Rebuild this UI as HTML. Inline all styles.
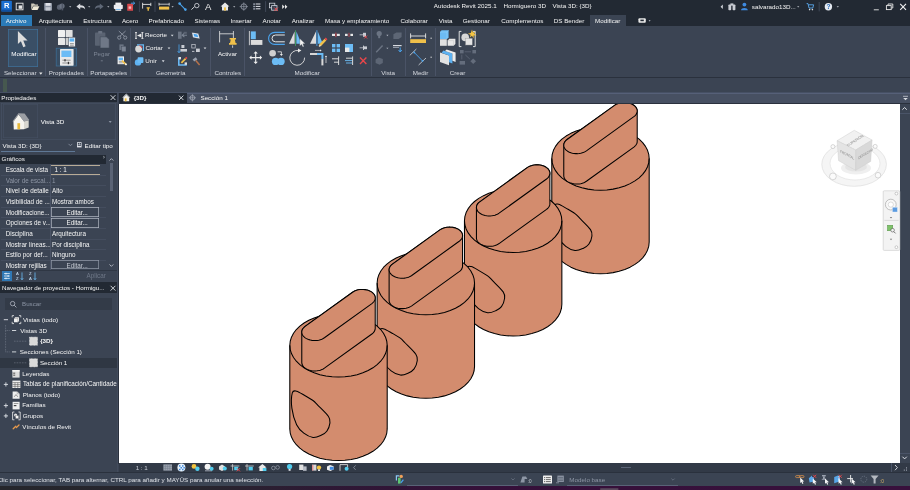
<!DOCTYPE html>
<html lang="es"><head><meta charset="utf-8"><title>Autodesk Revit 2025.1 - Hormiguero 3D - Vista 3D: {3D}</title>
<style>
html,body{margin:0;padding:0;}
body{width:910px;height:490px;overflow:hidden;background:#3b4453;position:relative;font-family:"Liberation Sans",sans-serif;}
#app{position:absolute;left:0;top:0;width:910px;height:490px;overflow:hidden;will-change:transform;}
#app div,#app span,#app svg{position:absolute;}
#app span{white-space:nowrap;}
</style></head><body><div id="app">
<div style="left:0.00px;top:0.00px;width:910.00px;height:26.00px;background:#222933;"></div>
<div style="left:0.00px;top:26.00px;width:910.00px;height:51.50px;background:#3b4453;"></div>
<div style="left:0.00px;top:77.20px;width:910.00px;height:1.00px;background:#2a313d;"></div>
<div style="left:0.00px;top:78.20px;width:910.00px;height:14.00px;background:#3b4453;"></div>
<div style="left:3.00px;top:79.00px;width:4.00px;height:12.50px;background:#46584f;"></div>
<div style="left:0.00px;top:92.00px;width:910.00px;height:0.70px;background:#465064;"></div>
<div style="left:118.50px;top:92.60px;width:791.50px;height:10.60px;background:#475062;"></div>
<div style="left:118.50px;top:92.60px;width:791.50px;height:0.70px;background:#566078;"></div>
<div style="left:118.50px;top:103.00px;width:791.50px;height:0.90px;background:#2a313d;"></div>
<div style="left:118.70px;top:103.80px;width:781.50px;height:359.30px;background:#ffffff;"></div>
<div style="left:116.80px;top:92.60px;width:1.50px;height:380.00px;background:#424b5c;"></div>
<div style="left:118.20px;top:103.60px;width:0.70px;height:360.00px;background:#2a313d;"></div>
<div style="left:900.20px;top:103.80px;width:9.80px;height:359.30px;background:#3b4453;"></div>
<div style="left:900.20px;top:113.20px;width:9.80px;height:0.70px;background:#4a5468;"></div>
<div style="left:900.20px;top:452.50px;width:9.80px;height:0.70px;background:#4a5468;"></div>
<div style="left:118.70px;top:463.10px;width:791.30px;height:9.20px;background:#323a47;"></div>
<div style="left:891.30px;top:463.10px;width:0.70px;height:9.20px;background:#4a5468;"></div>
<div style="left:621.00px;top:466.60px;width:9.50px;height:1.60px;background:#5a6375;"></div>
<div style="left:0.00px;top:472.30px;width:910.00px;height:14.50px;background:#3b4453;"></div>
<div style="left:0.00px;top:472.30px;width:910.00px;height:0.70px;background:#2a313d;"></div>
<div style="left:0.00px;top:486.30px;width:910.00px;height:3.70px;background:linear-gradient(90deg,#25262c 0px,#27252d 200px,#2e1834 330px,#351039 480px,#38103c 910px);"></div>
<span style="left:433.81px;top:0.80px;font-size:6.25px;line-height:10px;color:#f5f5f5;">Autodesk Revit 2025.1</span>
<span style="left:503.56px;top:0.80px;font-size:6.25px;line-height:10px;color:#f5f5f5;">Hormiguero 3D</span>
<span style="left:552.43px;top:0.80px;font-size:6.25px;line-height:10px;color:#f5f5f5;">Vista 3D: {3D}</span>
<span style="left:751.86px;top:2.00px;font-size:6.25px;line-height:10px;color:#f5f5f5;">salvarado13D...</span>
<div style="left:1.00px;top:15.00px;width:31.00px;height:11.00px;background:#2b7bb8;"></div>
<span style="left:5.63px;top:15.70px;font-size:6.25px;line-height:10px;color:#f5f5f5;">Archivo</span>
<span style="left:38.65px;top:15.70px;font-size:6.25px;line-height:10px;color:#f5f5f5;">Arquitectura</span>
<span style="left:83.21px;top:15.70px;font-size:6.25px;line-height:10px;color:#f5f5f5;">Estructura</span>
<span style="left:121.89px;top:15.70px;font-size:6.25px;line-height:10px;color:#f5f5f5;">Acero</span>
<span style="left:148.48px;top:15.70px;font-size:6.25px;line-height:10px;color:#f5f5f5;">Prefabricado</span>
<span style="left:194.50px;top:15.70px;font-size:6.25px;line-height:10px;color:#f5f5f5;">Sistemas</span>
<span style="left:230.51px;top:15.70px;font-size:6.25px;line-height:10px;color:#f5f5f5;">Insertar</span>
<span style="left:262.49px;top:15.70px;font-size:6.25px;line-height:10px;color:#f5f5f5;">Anotar</span>
<span style="left:291.66px;top:15.70px;font-size:6.25px;line-height:10px;color:#f5f5f5;">Analizar</span>
<span style="left:325.02px;top:15.70px;font-size:6.25px;line-height:10px;color:#f5f5f5;">Masa y emplazamiento</span>
<span style="left:400.38px;top:15.70px;font-size:6.25px;line-height:10px;color:#f5f5f5;">Colaborar</span>
<span style="left:438.81px;top:15.70px;font-size:6.25px;line-height:10px;color:#f5f5f5;">Vista</span>
<span style="left:462.70px;top:15.70px;font-size:6.25px;line-height:10px;color:#f5f5f5;">Gestionar</span>
<span style="left:501.34px;top:15.70px;font-size:6.25px;line-height:10px;color:#f5f5f5;">Complementos</span>
<span style="left:553.76px;top:15.70px;font-size:6.25px;line-height:10px;color:#f5f5f5;">DS Bender</span>
<div style="left:590.20px;top:14.80px;width:36.00px;height:11.40px;background:#3b4453;"></div>
<span style="left:594.97px;top:15.70px;font-size:6.25px;line-height:10px;color:#f5f5f5;">Modificar</span>
<span style="left:3.92px;top:68.40px;font-size:6.25px;line-height:10px;color:#d7dae0;">Seleccionar</span>
<span style="left:48.75px;top:68.40px;font-size:6.25px;line-height:10px;color:#d7dae0;">Propiedades</span>
<span style="left:90.34px;top:68.40px;font-size:6.25px;line-height:10px;color:#d7dae0;">Portapapeles</span>
<span style="left:155.89px;top:68.40px;font-size:6.25px;line-height:10px;color:#d7dae0;">Geometría</span>
<span style="left:214.38px;top:68.40px;font-size:6.25px;line-height:10px;color:#d7dae0;">Controles</span>
<span style="left:294.57px;top:68.40px;font-size:6.25px;line-height:10px;color:#d7dae0;">Modificar</span>
<span style="left:381.31px;top:68.40px;font-size:6.25px;line-height:10px;color:#d7dae0;">Vista</span>
<span style="left:412.69px;top:68.40px;font-size:6.25px;line-height:10px;color:#d7dae0;">Medir</span>
<span style="left:449.69px;top:68.40px;font-size:6.25px;line-height:10px;color:#d7dae0;">Crear</span>
<div style="left:45.20px;top:28.00px;width:0.70px;height:48.00px;background:#4a5366;"></div>
<div style="left:87.20px;top:28.00px;width:0.70px;height:48.00px;background:#4a5366;"></div>
<div style="left:130.20px;top:28.00px;width:0.70px;height:48.00px;background:#4a5366;"></div>
<div style="left:210.20px;top:28.00px;width:0.70px;height:48.00px;background:#4a5366;"></div>
<div style="left:243.50px;top:28.00px;width:0.70px;height:48.00px;background:#4a5366;"></div>
<div style="left:370.50px;top:28.00px;width:0.70px;height:48.00px;background:#4a5366;"></div>
<div style="left:405.00px;top:28.00px;width:0.70px;height:48.00px;background:#4a5366;"></div>
<div style="left:435.00px;top:28.00px;width:0.70px;height:48.00px;background:#4a5366;"></div>
<div style="left:8.20px;top:28.70px;width:29.50px;height:38.00px;background:#3a4f66;box-shadow:inset 0 0 0 0.7px #3f7098;"></div>
<span style="left:11.22px;top:49.20px;font-size:6.25px;line-height:10px;color:#ffffff;">Modificar</span>
<span style="left:93.46px;top:49.20px;font-size:6.25px;line-height:10px;color:#7d8594;">Pegar</span>
<span style="left:145.11px;top:30.30px;font-size:6.25px;line-height:10px;color:#f5f5f5;">Recorte</span>
<span style="left:145.47px;top:43.20px;font-size:6.25px;line-height:10px;color:#f5f5f5;">Cortar</span>
<span style="left:145.32px;top:56.00px;font-size:6.25px;line-height:10px;color:#f5f5f5;">Unir</span>
<span style="left:217.95px;top:49.20px;font-size:6.25px;line-height:10px;color:#f5f5f5;">Activar</span>
<div style="left:0.00px;top:92.60px;width:116.80px;height:9.60px;background:#222933;"></div>
<span style="left:1.30px;top:92.60px;font-size:6.25px;line-height:10px;color:#f5f5f5;">Propiedades</span>
<div style="left:1.00px;top:102.50px;width:114.50px;height:37.00px;background:#3b4453;box-shadow:inset 0 0 0 0.6px #4a5468;"></div>
<div style="left:3.30px;top:104.20px;width:35.20px;height:34.30px;background:#3b4453;box-shadow:inset 0 0 0 0.6px #465064;"></div>
<span style="left:40.65px;top:116.60px;font-size:6.25px;line-height:10px;color:#ffffff;">Vista 3D</span>
<span style="left:2.43px;top:140.60px;font-size:6.25px;line-height:10px;color:#f5f5f5;">Vista 3D: {3D}</span>
<div style="left:1.00px;top:150.80px;width:74.00px;height:0.80px;background:#5f7896;"></div>
<span style="left:84.58px;top:140.60px;font-size:6.25px;line-height:10px;color:#f5f5f5;">Editar tipo</span>
<div style="left:0.00px;top:154.80px;width:106.30px;height:9.00px;background:#222933;"></div>
<span style="left:1.62px;top:154.40px;font-size:6.25px;line-height:10px;color:#f5f5f5;">Gráficos</span>
<span style="left:5.70px;top:165.00px;font-size:6.30px;line-height:10px;color:#f5f5f5;width:44.00px;overflow:hidden;">Escala de vista</span>
<span style="left:54.50px;top:165.00px;font-size:6.30px;line-height:10px;color:#f5f5f5;">1 : 1</span>
<div style="left:1.00px;top:174.60px;width:105.00px;height:0.50px;background:#444d5e;"></div>
<span style="left:5.70px;top:175.60px;font-size:6.30px;line-height:10px;color:#8e96a5;width:44.00px;overflow:hidden;">Valor de escal...</span>
<span style="left:52.00px;top:175.60px;font-size:6.30px;line-height:10px;color:#8e96a5;">1</span>
<div style="left:1.00px;top:185.20px;width:105.00px;height:0.50px;background:#444d5e;"></div>
<span style="left:5.70px;top:186.20px;font-size:6.30px;line-height:10px;color:#f5f5f5;width:44.00px;overflow:hidden;">Nivel de detalle</span>
<span style="left:52.00px;top:186.20px;font-size:6.30px;line-height:10px;color:#f5f5f5;">Alto</span>
<div style="left:1.00px;top:195.80px;width:105.00px;height:0.50px;background:#444d5e;"></div>
<span style="left:5.70px;top:196.90px;font-size:6.30px;line-height:10px;color:#f5f5f5;width:44.00px;overflow:hidden;">Visibilidad de ...</span>
<span style="left:52.00px;top:196.90px;font-size:6.30px;line-height:10px;color:#f5f5f5;">Mostrar ambos</span>
<div style="left:1.00px;top:206.50px;width:105.00px;height:0.50px;background:#444d5e;"></div>
<span style="left:5.70px;top:207.60px;font-size:6.30px;line-height:10px;color:#f5f5f5;width:44.00px;overflow:hidden;">Modificacione...</span>
<div style="left:1.00px;top:217.20px;width:105.00px;height:0.50px;background:#444d5e;"></div>
<span style="left:5.70px;top:218.40px;font-size:6.30px;line-height:10px;color:#f5f5f5;width:44.00px;overflow:hidden;">Opciones de v...</span>
<div style="left:1.00px;top:228.00px;width:105.00px;height:0.50px;background:#444d5e;"></div>
<span style="left:5.70px;top:229.00px;font-size:6.30px;line-height:10px;color:#f5f5f5;width:44.00px;overflow:hidden;">Disciplina</span>
<span style="left:52.00px;top:229.00px;font-size:6.30px;line-height:10px;color:#f5f5f5;">Arquitectura</span>
<div style="left:1.00px;top:238.60px;width:105.00px;height:0.50px;background:#444d5e;"></div>
<span style="left:5.70px;top:239.60px;font-size:6.30px;line-height:10px;color:#f5f5f5;width:44.00px;overflow:hidden;">Mostrar líneas...</span>
<span style="left:52.00px;top:239.60px;font-size:6.30px;line-height:10px;color:#f5f5f5;">Por disciplina</span>
<div style="left:1.00px;top:249.20px;width:105.00px;height:0.50px;background:#444d5e;"></div>
<span style="left:5.70px;top:250.20px;font-size:6.30px;line-height:10px;color:#f5f5f5;width:44.00px;overflow:hidden;">Estilo por def...</span>
<span style="left:52.00px;top:250.20px;font-size:6.30px;line-height:10px;color:#f5f5f5;">Ninguno</span>
<div style="left:1.00px;top:259.80px;width:105.00px;height:0.50px;background:#444d5e;"></div>
<span style="left:5.70px;top:260.80px;font-size:6.30px;line-height:10px;color:#f5f5f5;width:44.00px;overflow:hidden;">Mostrar rejillas</span>
<div style="left:1.00px;top:270.40px;width:105.00px;height:0.50px;background:#444d5e;"></div>
<div style="left:50.30px;top:164.00px;width:0.50px;height:106.00px;background:#4a5366;"></div>
<div style="left:51.40px;top:164.60px;width:48.60px;height:0.70px;background:#b9ac97;"></div>
<div style="left:51.40px;top:174.00px;width:48.60px;height:0.70px;background:#b9ac97;"></div>
<div style="left:51.40px;top:207.20px;width:48.00px;height:9.60px;background:transparent;box-shadow:inset 0 0 0 0.7px #aeb4c0;"></div>
<span style="left:66.50px;top:207.60px;font-size:6.30px;line-height:10px;color:#f5f5f5;">Editar...</span>
<div style="left:51.40px;top:218.00px;width:48.00px;height:9.60px;background:transparent;box-shadow:inset 0 0 0 0.7px #aeb4c0;"></div>
<span style="left:66.50px;top:218.40px;font-size:6.30px;line-height:10px;color:#f5f5f5;">Editar...</span>
<div style="left:51.40px;top:260.40px;width:48.00px;height:9.00px;background:transparent;box-shadow:inset 0 0 0 0.7px #8e96a5;"></div>
<span style="left:66.50px;top:260.80px;font-size:6.30px;line-height:10px;color:#c3c8d1;">Editar...</span>
<div style="left:107.00px;top:154.80px;width:9.50px;height:115.40px;background:#3b4453;"></div>
<div style="left:110.00px;top:163.40px;width:2.60px;height:28.00px;background:#5a6375;"></div>
<div style="left:0.00px;top:270.20px;width:116.80px;height:11.80px;background:#3b4453;"></div>
<div style="left:0.00px;top:270.20px;width:116.80px;height:0.60px;background:#2f3744;"></div>
<div style="left:2.20px;top:271.20px;width:9.40px;height:9.60px;background:#2f78b5;"></div>
<span style="left:86.60px;top:270.80px;font-size:6.30px;line-height:10px;color:#6f7888;">Aplicar</span>
<div style="left:0.00px;top:282.20px;width:116.80px;height:10.40px;background:#222933;"></div>
<span style="left:2.01px;top:283.00px;font-size:6.25px;line-height:10px;color:#f5f5f5;">Navegador de proyectos - Hormigu...</span>
<div style="left:5.00px;top:298.00px;width:107.00px;height:12.00px;background:#333b48;"></div>
<span style="left:22.00px;top:299.00px;font-size:6.20px;line-height:10px;color:#8a93a3;">Buscar</span>
<div style="left:0.00px;top:357.60px;width:116.80px;height:10.40px;background:#2f3743;"></div>
<span style="left:23.02px;top:315.00px;font-size:6.25px;line-height:10px;color:#f5f5f5;">Vistas (todo)</span>
<span style="left:20.28px;top:326.00px;font-size:6.25px;line-height:10px;color:#f5f5f5;">Vistas 3D</span>
<span style="left:40.17px;top:336.00px;font-size:6.25px;line-height:10px;color:#f5f5f5;font-weight:bold;">{3D}</span>
<span style="left:19.76px;top:347.00px;font-size:6.25px;line-height:10px;color:#f5f5f5;">Secciones (Sección 1)</span>
<span style="left:39.88px;top:358.00px;font-size:6.25px;line-height:10px;color:#f5f5f5;">Sección 1</span>
<span style="left:22.35px;top:369.00px;font-size:6.25px;line-height:10px;color:#f5f5f5;">Leyendas</span>
<span style="left:22.90px;top:379.00px;font-size:6.30px;line-height:10px;color:#f5f5f5;width:93.90px;overflow:hidden;">Tablas de planificación/Cantidades</span>
<span style="left:22.81px;top:390.00px;font-size:6.25px;line-height:10px;color:#f5f5f5;">Planos (todo)</span>
<span style="left:22.27px;top:400.00px;font-size:6.25px;line-height:10px;color:#f5f5f5;">Familias</span>
<span style="left:22.65px;top:411.00px;font-size:6.25px;line-height:10px;color:#f5f5f5;">Grupos</span>
<span style="left:22.33px;top:422.00px;font-size:6.25px;line-height:10px;color:#f5f5f5;">Vínculos de Revit</span>
<div style="left:118.70px;top:92.60px;width:68.00px;height:10.60px;background:#222933;"></div>
<span style="left:133.67px;top:92.80px;font-size:6.25px;line-height:10px;color:#f5f5f5;font-weight:bold;">{3D}</span>
<span style="left:200.48px;top:92.80px;font-size:6.25px;line-height:10px;color:#f5f5f5;">Sección 1</span>
<span style="left:-2.63px;top:475.00px;font-size:6.25px;line-height:10px;color:#dfe2e8;">Clic para seleccionar, TAB para alternar, CTRL para añadir y MAYÚS para anular una selección.</span>
<span style="left:135.67px;top:462.60px;font-size:6.25px;line-height:10px;color:#c9cdd6;">1 : 1</span>
<span style="left:569.36px;top:475.00px;font-size:6.25px;line-height:10px;color:#8e96a5;">Modelo base</span>
<div style="left:567.00px;top:485.10px;width:110.60px;height:0.70px;background:#596377;"></div>
<div style="left:407.00px;top:485.10px;width:110.70px;height:0.70px;background:#596377;"></div>
<svg style="left:118.70px;top:103.80px;" width="781.5" height="359.3" viewBox="118.7 103.8 781.5 359.3"><g><path d="M551.49,158.30 L551.49,158.30 L551.91,154.16 L553.15,150.10 L555.20,146.17 L558.01,142.45 L561.55,139.00 L565.75,135.88 L570.54,133.15 L575.84,130.85 L581.55,129.01 L587.59,127.68 L593.83,126.87 L600.19,126.60 L606.55,126.87 L612.79,127.68 L618.83,129.01 L624.54,130.85 L629.84,133.15 L634.63,135.88 L638.83,139.00 L642.37,142.45 L645.18,146.17 L647.23,150.10 L648.47,154.16 L648.89,158.30 L648.89,241.80 L648.89,241.80 L648.47,245.94 L647.23,250.00 L645.18,253.93 L642.37,257.65 L638.83,261.10 L634.63,264.22 L629.84,266.95 L624.54,269.25 L618.83,271.09 L612.79,272.42 L606.55,273.23 L600.19,273.50 L593.83,273.23 L587.59,272.42 L581.55,271.09 L575.84,269.25 L570.54,266.95 L565.75,264.22 L561.55,261.10 L558.01,257.65 L555.20,253.93 L553.15,250.00 L551.91,245.94 L551.49,241.80 Z" fill="#d38c6e" stroke="#000" stroke-width="1.05" stroke-linejoin="round"/>
<path d="M551.49,158.30 L551.91,162.44 L553.15,166.50 L555.20,170.43 L558.01,174.15 L561.55,177.60 L565.75,180.72 L570.54,183.45 L575.84,185.75 L581.55,187.59 L587.59,188.92 L593.83,189.73 L600.19,190.00 L606.55,189.73 L612.79,188.92 L618.83,187.59 L624.54,185.75 L629.84,183.45 L634.63,180.72 L638.83,177.60 L642.37,174.15 L645.18,170.43 L647.23,166.50 L648.47,162.44 L648.89,158.30" fill="none" stroke="#000" stroke-width="1.05"/>
<path d="M553.99,205.70 C554.77,202.83 556.21,203.65 558.29,204.10 C560.37,204.55 563.76,206.85 566.49,208.40 C569.22,209.95 572.51,211.77 574.69,213.40 C576.87,215.03 577.01,215.53 579.59,218.20 C582.17,220.87 588.19,226.43 590.19,229.40 C592.19,232.37 591.87,233.55 591.59,236.00 C591.31,238.45 589.96,242.07 588.49,244.10 C587.02,246.13 585.09,247.17 582.79,248.20 C580.49,249.23 577.57,250.65 574.69,250.30 C571.81,249.95 568.22,248.22 565.49,246.10 C562.76,243.98 560.27,241.73 558.29,237.60 C556.31,233.47 554.31,226.62 553.59,221.30 C552.87,215.98 553.21,208.57 553.99,205.70Z" fill="none" stroke="#000" stroke-width="1.05"/>
<path d="M563.47,175.83 L563.67,176.92 L564.09,178.00 L564.71,179.03 L565.54,179.99 L566.56,180.88 L567.74,181.68 L569.07,182.36 L570.53,182.93 L572.10,183.37 L573.73,183.67 L575.41,183.83 L577.11,183.85 L578.80,183.72 L580.45,183.45 L582.03,183.04 L583.52,182.50 L584.88,181.84 L586.10,181.07 L633.57,146.88 L634.62,146.01 L635.50,145.06 L636.17,144.04 L636.63,142.98 L636.88,141.88 L636.91,140.77 L636.91,110.37 L636.71,109.28 L636.29,108.20 L635.67,107.17 L634.84,106.21 L633.82,105.32 L632.64,104.52 L631.31,103.84 L629.85,103.27 L628.28,102.83 L626.65,102.53 L624.97,102.37 L623.27,102.35 L621.58,102.48 L619.93,102.75 L618.35,103.16 L616.86,103.70 L615.50,104.36 L614.28,105.13 L566.81,139.32 L565.76,140.19 L564.88,141.14 L564.21,142.16 L563.75,143.22 L563.50,144.32 L563.47,145.43 Z" fill="#d38c6e" stroke="#000" stroke-width="1.05" stroke-linejoin="round"/>
<path d="M633.57,116.48 L634.62,115.61 L635.50,114.66 L636.17,113.64 L636.63,112.58 L636.88,111.48 L636.91,110.37 L636.71,109.28 L636.29,108.20 L635.67,107.17 L634.84,106.21 L633.82,105.32 L632.64,104.52 L631.31,103.84 L629.85,103.27 L628.28,102.83 L626.65,102.53 L624.97,102.37 L623.27,102.35 L621.58,102.48 L619.93,102.75 L618.35,103.16 L616.86,103.70 L615.50,104.36 L614.28,105.13 L566.81,139.32 L565.76,140.19 L564.88,141.14 L564.21,142.16 L563.75,143.22 L563.50,144.32 L563.47,145.43 L563.67,146.52 L564.09,147.60 L564.71,148.63 L565.54,149.59 L566.56,150.48 L567.74,151.28 L569.07,151.96 L570.53,152.53 L572.10,152.97 L573.73,153.27 L575.41,153.43 L577.11,153.45 L578.80,153.32 L580.45,153.05 L582.03,152.64 L583.52,152.10 L584.88,151.44 L586.10,150.67 Z" fill="#d38c6e" stroke="#000" stroke-width="1.05" stroke-linejoin="round"/></g>
<g><path d="M464.16,220.60 L464.16,220.60 L464.58,216.46 L465.82,212.40 L467.87,208.47 L470.68,204.75 L474.22,201.30 L478.42,198.18 L483.21,195.45 L488.51,193.15 L494.22,191.31 L500.26,189.98 L506.50,189.17 L512.86,188.90 L519.22,189.17 L525.46,189.98 L531.50,191.31 L537.21,193.15 L542.51,195.45 L547.30,198.18 L551.50,201.30 L555.04,204.75 L557.85,208.47 L559.90,212.40 L561.14,216.46 L561.56,220.60 L561.56,304.10 L561.56,304.10 L561.14,308.24 L559.90,312.30 L557.85,316.23 L555.04,319.95 L551.50,323.40 L547.30,326.52 L542.51,329.25 L537.21,331.55 L531.50,333.39 L525.46,334.72 L519.22,335.53 L512.86,335.80 L506.50,335.53 L500.26,334.72 L494.22,333.39 L488.51,331.55 L483.21,329.25 L478.42,326.52 L474.22,323.40 L470.68,319.95 L467.87,316.23 L465.82,312.30 L464.58,308.24 L464.16,304.10 Z" fill="#d38c6e" stroke="#000" stroke-width="1.05" stroke-linejoin="round"/>
<path d="M464.16,220.60 L464.58,224.74 L465.82,228.80 L467.87,232.73 L470.68,236.45 L474.22,239.90 L478.42,243.02 L483.21,245.75 L488.51,248.05 L494.22,249.89 L500.26,251.22 L506.50,252.03 L512.86,252.30 L519.22,252.03 L525.46,251.22 L531.50,249.89 L537.21,248.05 L542.51,245.75 L547.30,243.02 L551.50,239.90 L555.04,236.45 L557.85,232.73 L559.90,228.80 L561.14,224.74 L561.56,220.60" fill="none" stroke="#000" stroke-width="1.05"/>
<path d="M466.66,268.00 C467.44,265.13 468.88,265.95 470.96,266.40 C473.04,266.85 476.43,269.15 479.16,270.70 C481.89,272.25 485.18,274.07 487.36,275.70 C489.54,277.33 489.68,277.83 492.26,280.50 C494.84,283.17 500.86,288.73 502.86,291.70 C504.86,294.67 504.54,295.85 504.26,298.30 C503.98,300.75 502.63,304.37 501.16,306.40 C499.69,308.43 497.76,309.47 495.46,310.50 C493.16,311.53 490.24,312.95 487.36,312.60 C484.48,312.25 480.89,310.52 478.16,308.40 C475.43,306.28 472.94,304.03 470.96,299.90 C468.98,295.77 466.98,288.92 466.26,283.60 C465.54,278.28 465.88,270.87 466.66,268.00Z" fill="none" stroke="#000" stroke-width="1.05"/>
<path d="M476.14,238.13 L476.34,239.22 L476.76,240.30 L477.38,241.33 L478.21,242.29 L479.23,243.18 L480.41,243.98 L481.74,244.66 L483.20,245.23 L484.77,245.67 L486.40,245.97 L488.08,246.13 L489.78,246.15 L491.47,246.02 L493.12,245.75 L494.70,245.34 L496.19,244.80 L497.55,244.14 L498.77,243.37 L546.24,209.18 L547.29,208.31 L548.17,207.36 L548.84,206.34 L549.30,205.28 L549.55,204.18 L549.58,203.07 L549.58,172.67 L549.38,171.58 L548.96,170.50 L548.34,169.47 L547.51,168.51 L546.49,167.62 L545.31,166.82 L543.98,166.14 L542.52,165.57 L540.95,165.13 L539.32,164.83 L537.64,164.67 L535.94,164.65 L534.25,164.78 L532.60,165.05 L531.02,165.46 L529.53,166.00 L528.17,166.66 L526.95,167.43 L479.48,201.62 L478.43,202.49 L477.55,203.44 L476.88,204.46 L476.42,205.52 L476.17,206.62 L476.14,207.73 Z" fill="#d38c6e" stroke="#000" stroke-width="1.05" stroke-linejoin="round"/>
<path d="M546.24,178.78 L547.29,177.91 L548.17,176.96 L548.84,175.94 L549.30,174.88 L549.55,173.78 L549.58,172.67 L549.38,171.58 L548.96,170.50 L548.34,169.47 L547.51,168.51 L546.49,167.62 L545.31,166.82 L543.98,166.14 L542.52,165.57 L540.95,165.13 L539.32,164.83 L537.64,164.67 L535.94,164.65 L534.25,164.78 L532.60,165.05 L531.02,165.46 L529.53,166.00 L528.17,166.66 L526.95,167.43 L479.48,201.62 L478.43,202.49 L477.55,203.44 L476.88,204.46 L476.42,205.52 L476.17,206.62 L476.14,207.73 L476.34,208.82 L476.76,209.90 L477.38,210.93 L478.21,211.89 L479.23,212.78 L480.41,213.58 L481.74,214.26 L483.20,214.83 L484.77,215.27 L486.40,215.57 L488.08,215.73 L489.78,215.75 L491.47,215.62 L493.12,215.35 L494.70,214.94 L496.19,214.40 L497.55,213.74 L498.77,212.97 Z" fill="#d38c6e" stroke="#000" stroke-width="1.05" stroke-linejoin="round"/></g>
<g><path d="M376.83,282.90 L376.83,282.90 L377.25,278.76 L378.49,274.70 L380.54,270.77 L383.35,267.05 L386.89,263.60 L391.09,260.48 L395.88,257.75 L401.18,255.45 L406.89,253.61 L412.93,252.28 L419.17,251.47 L425.53,251.20 L431.89,251.47 L438.13,252.28 L444.17,253.61 L449.88,255.45 L455.18,257.75 L459.97,260.48 L464.17,263.60 L467.71,267.05 L470.52,270.77 L472.57,274.70 L473.81,278.76 L474.23,282.90 L474.23,366.40 L474.23,366.40 L473.81,370.54 L472.57,374.60 L470.52,378.53 L467.71,382.25 L464.17,385.70 L459.97,388.82 L455.18,391.55 L449.88,393.85 L444.17,395.69 L438.13,397.02 L431.89,397.83 L425.53,398.10 L419.17,397.83 L412.93,397.02 L406.89,395.69 L401.18,393.85 L395.88,391.55 L391.09,388.82 L386.89,385.70 L383.35,382.25 L380.54,378.53 L378.49,374.60 L377.25,370.54 L376.83,366.40 Z" fill="#d38c6e" stroke="#000" stroke-width="1.05" stroke-linejoin="round"/>
<path d="M376.83,282.90 L377.25,287.04 L378.49,291.10 L380.54,295.03 L383.35,298.75 L386.89,302.20 L391.09,305.32 L395.88,308.05 L401.18,310.35 L406.89,312.19 L412.93,313.52 L419.17,314.33 L425.53,314.60 L431.89,314.33 L438.13,313.52 L444.17,312.19 L449.88,310.35 L455.18,308.05 L459.97,305.32 L464.17,302.20 L467.71,298.75 L470.52,295.03 L472.57,291.10 L473.81,287.04 L474.23,282.90" fill="none" stroke="#000" stroke-width="1.05"/>
<path d="M379.33,330.30 C380.11,327.43 381.55,328.25 383.63,328.70 C385.71,329.15 389.10,331.45 391.83,333.00 C394.56,334.55 397.85,336.37 400.03,338.00 C402.21,339.63 402.35,340.13 404.93,342.80 C407.51,345.47 413.53,351.03 415.53,354.00 C417.53,356.97 417.21,358.15 416.93,360.60 C416.65,363.05 415.30,366.67 413.83,368.70 C412.36,370.73 410.43,371.77 408.13,372.80 C405.83,373.83 402.91,375.25 400.03,374.90 C397.15,374.55 393.56,372.82 390.83,370.70 C388.10,368.58 385.61,366.33 383.63,362.20 C381.65,358.07 379.65,351.22 378.93,345.90 C378.21,340.58 378.55,333.17 379.33,330.30Z" fill="none" stroke="#000" stroke-width="1.05"/>
<path d="M388.81,300.43 L389.01,301.52 L389.43,302.60 L390.05,303.63 L390.88,304.59 L391.90,305.48 L393.08,306.28 L394.41,306.96 L395.87,307.53 L397.44,307.97 L399.07,308.27 L400.75,308.43 L402.45,308.45 L404.14,308.32 L405.79,308.05 L407.37,307.64 L408.86,307.10 L410.22,306.44 L411.44,305.67 L458.91,271.48 L459.96,270.61 L460.84,269.66 L461.51,268.64 L461.97,267.58 L462.22,266.48 L462.25,265.37 L462.25,234.97 L462.05,233.88 L461.63,232.80 L461.01,231.77 L460.18,230.81 L459.16,229.92 L457.98,229.12 L456.65,228.44 L455.19,227.87 L453.62,227.43 L451.99,227.13 L450.31,226.97 L448.61,226.95 L446.92,227.08 L445.27,227.35 L443.69,227.76 L442.20,228.30 L440.84,228.96 L439.62,229.73 L392.15,263.92 L391.10,264.79 L390.22,265.74 L389.55,266.76 L389.09,267.82 L388.84,268.92 L388.81,270.03 Z" fill="#d38c6e" stroke="#000" stroke-width="1.05" stroke-linejoin="round"/>
<path d="M458.91,241.08 L459.96,240.21 L460.84,239.26 L461.51,238.24 L461.97,237.18 L462.22,236.08 L462.25,234.97 L462.05,233.88 L461.63,232.80 L461.01,231.77 L460.18,230.81 L459.16,229.92 L457.98,229.12 L456.65,228.44 L455.19,227.87 L453.62,227.43 L451.99,227.13 L450.31,226.97 L448.61,226.95 L446.92,227.08 L445.27,227.35 L443.69,227.76 L442.20,228.30 L440.84,228.96 L439.62,229.73 L392.15,263.92 L391.10,264.79 L390.22,265.74 L389.55,266.76 L389.09,267.82 L388.84,268.92 L388.81,270.03 L389.01,271.12 L389.43,272.20 L390.05,273.23 L390.88,274.19 L391.90,275.08 L393.08,275.88 L394.41,276.56 L395.87,277.13 L397.44,277.57 L399.07,277.87 L400.75,278.03 L402.45,278.05 L404.14,277.92 L405.79,277.65 L407.37,277.24 L408.86,276.70 L410.22,276.04 L411.44,275.27 Z" fill="#d38c6e" stroke="#000" stroke-width="1.05" stroke-linejoin="round"/></g>
<g><path d="M289.50,345.20 L289.50,345.20 L289.92,341.06 L291.16,337.00 L293.21,333.07 L296.02,329.35 L299.56,325.90 L303.76,322.78 L308.55,320.05 L313.85,317.75 L319.56,315.91 L325.60,314.58 L331.84,313.77 L338.20,313.50 L344.56,313.77 L350.80,314.58 L356.84,315.91 L362.55,317.75 L367.85,320.05 L372.64,322.78 L376.84,325.90 L380.38,329.35 L383.19,333.07 L385.24,337.00 L386.48,341.06 L386.90,345.20 L386.90,428.70 L386.90,428.70 L386.48,432.84 L385.24,436.90 L383.19,440.83 L380.38,444.55 L376.84,448.00 L372.64,451.12 L367.85,453.85 L362.55,456.15 L356.84,457.99 L350.80,459.32 L344.56,460.13 L338.20,460.40 L331.84,460.13 L325.60,459.32 L319.56,457.99 L313.85,456.15 L308.55,453.85 L303.76,451.12 L299.56,448.00 L296.02,444.55 L293.21,440.83 L291.16,436.90 L289.92,432.84 L289.50,428.70 Z" fill="#d38c6e" stroke="#000" stroke-width="1.05" stroke-linejoin="round"/>
<path d="M289.50,345.20 L289.92,349.34 L291.16,353.40 L293.21,357.33 L296.02,361.05 L299.56,364.50 L303.76,367.62 L308.55,370.35 L313.85,372.65 L319.56,374.49 L325.60,375.82 L331.84,376.63 L338.20,376.90 L344.56,376.63 L350.80,375.82 L356.84,374.49 L362.55,372.65 L367.85,370.35 L372.64,367.62 L376.84,364.50 L380.38,361.05 L383.19,357.33 L385.24,353.40 L386.48,349.34 L386.90,345.20" fill="none" stroke="#000" stroke-width="1.05"/>
<path d="M292.00,392.60 C292.78,389.73 294.22,390.55 296.30,391.00 C298.38,391.45 301.77,393.75 304.50,395.30 C307.23,396.85 310.52,398.67 312.70,400.30 C314.88,401.93 315.02,402.43 317.60,405.10 C320.18,407.77 326.20,413.33 328.20,416.30 C330.20,419.27 329.88,420.45 329.60,422.90 C329.32,425.35 327.97,428.97 326.50,431.00 C325.03,433.03 323.10,434.07 320.80,435.10 C318.50,436.13 315.58,437.55 312.70,437.20 C309.82,436.85 306.23,435.12 303.50,433.00 C300.77,430.88 298.28,428.63 296.30,424.50 C294.32,420.37 292.32,413.52 291.60,408.20 C290.88,402.88 291.22,395.47 292.00,392.60Z" fill="none" stroke="#000" stroke-width="1.05"/>
<path d="M301.48,362.73 L301.68,363.82 L302.10,364.90 L302.72,365.93 L303.55,366.89 L304.57,367.78 L305.75,368.58 L307.08,369.26 L308.54,369.83 L310.11,370.27 L311.74,370.57 L313.42,370.73 L315.12,370.75 L316.81,370.62 L318.46,370.35 L320.04,369.94 L321.53,369.40 L322.89,368.74 L324.11,367.97 L371.58,333.78 L372.63,332.91 L373.51,331.96 L374.18,330.94 L374.64,329.88 L374.89,328.78 L374.92,327.67 L374.92,297.27 L374.72,296.18 L374.30,295.10 L373.68,294.07 L372.85,293.11 L371.83,292.22 L370.65,291.42 L369.32,290.74 L367.86,290.17 L366.29,289.73 L364.66,289.43 L362.98,289.27 L361.28,289.25 L359.59,289.38 L357.94,289.65 L356.36,290.06 L354.87,290.60 L353.51,291.26 L352.29,292.03 L304.82,326.22 L303.77,327.09 L302.89,328.04 L302.22,329.06 L301.76,330.12 L301.51,331.22 L301.48,332.33 Z" fill="#d38c6e" stroke="#000" stroke-width="1.05" stroke-linejoin="round"/>
<path d="M371.58,303.38 L372.63,302.51 L373.51,301.56 L374.18,300.54 L374.64,299.48 L374.89,298.38 L374.92,297.27 L374.72,296.18 L374.30,295.10 L373.68,294.07 L372.85,293.11 L371.83,292.22 L370.65,291.42 L369.32,290.74 L367.86,290.17 L366.29,289.73 L364.66,289.43 L362.98,289.27 L361.28,289.25 L359.59,289.38 L357.94,289.65 L356.36,290.06 L354.87,290.60 L353.51,291.26 L352.29,292.03 L304.82,326.22 L303.77,327.09 L302.89,328.04 L302.22,329.06 L301.76,330.12 L301.51,331.22 L301.48,332.33 L301.68,333.42 L302.10,334.50 L302.72,335.53 L303.55,336.49 L304.57,337.38 L305.75,338.18 L307.08,338.86 L308.54,339.43 L310.11,339.87 L311.74,340.17 L313.42,340.33 L315.12,340.35 L316.81,340.22 L318.46,339.95 L320.04,339.54 L321.53,339.00 L322.89,338.34 L324.11,337.57 Z" fill="#d38c6e" stroke="#000" stroke-width="1.05" stroke-linejoin="round"/></g>
</svg>
<svg style="left:0;top:0;pointer-events:none" width="910" height="490" viewBox="0 0 910 490"><rect x="1.30" y="0.80" width="10.60" height="10.70" fill="#1b6fd0" rx="0.8"/><rect x="1.30" y="9.60" width="10.60" height="1.90" fill="#0f4f9e" /><text x="6.7" y="8.4" font-family="Liberation Sans, sans-serif" font-weight="bold" font-size="7.6" fill="#fff" text-anchor="middle">R</text><rect x="16.20" y="3.20" width="6.80" height="6.60" fill="none" stroke="#e6e6e6" stroke-width="0.9"/><rect x="18.60" y="5.40" width="3.40" height="3.40" fill="#e6e6e6" /><path d="M31.2,9.8 L31.2,3.6 L34,3.6 L35,4.6 L38,4.6 L38,5.8 L33.2,5.8 Z" fill="#cfcabb" stroke="none" stroke-width="0.8" /><path d="M31.6,9.9 L33.4,6.2 L39.4,6.2 L37.6,9.9Z" fill="#eee8d5" stroke="none" stroke-width="0.8" /><rect x="44.20" y="3.00" width="7.80" height="7.60" fill="#8d95a3" rx="0.6"/><rect x="45.60" y="3.00" width="5.00" height="2.80" fill="#dfe2e8" /><rect x="45.60" y="7.20" width="5.00" height="3.40" fill="#c4c9d2" /><circle cx="59.50" cy="7.20" r="2.60" fill="#596170" stroke="none" stroke-width="0.8" /><circle cx="62.00" cy="6.00" r="2.60" fill="#6b7483" stroke="none" stroke-width="0.8" /><rect x="61.60" y="4.00" width="1.60" height="6.40" fill="#505867" /><path d="M69.10,6.19 L71.30,6.19 L70.20,7.62Z" fill="#c8ccd4" stroke="none" stroke-width="0.8" /><path d="M76.4,6.4 L80.2,3.4 L80.2,5.2 C83.5,5.2 85.2,6.6 85.2,9.6 C84.2,8 83,7.6 80.2,7.6 L80.2,9.4Z" fill="#d9dbe0" stroke="none" stroke-width="0.8" /><path d="M88.10,6.19 L90.30,6.19 L89.20,7.62Z" fill="#c8ccd4" stroke="none" stroke-width="0.8" /><path d="M103.6,6.4 L99.8,3.4 L99.8,5.2 C96.5,5.2 94.8,6.6 94.8,9.6 C95.8,8 97,7.6 99.8,7.6 L99.8,9.4Z" fill="#5f6877" stroke="none" stroke-width="0.8" /><path d="M107.20,6.19 L109.40,6.19 L108.30,7.62Z" fill="#c8ccd4" stroke="none" stroke-width="0.8" /><rect x="115.40" y="2.60" width="5.80" height="2.40" fill="#f2f2f2" /><rect x="113.80" y="4.80" width="9.00" height="4.20" fill="#e9ebef" rx="0.7"/><rect x="115.40" y="7.60" width="5.80" height="3.20" fill="#f7f7f7" /><rect x="116.00" y="8.90" width="4.60" height="0.90" fill="#58a6e8" /><rect x="127.20" y="3.80" width="5.80" height="7.00" fill="#d9484c" rx="0.4"/><rect x="128.60" y="6.40" width="2.60" height="2.40" fill="#f5b5b5" /><path d="M131,3.2 L134.6,3.2 M133.2,1.8 L134.8,3.2 L133.2,4.6" fill="none" stroke="#4aa3ec" stroke-width="0.9" /><line x1="139.40" y1="1.20" x2="139.40" y2="12.00" stroke="#4a5366" stroke-width="0.7" /><path d="M142.6,2.8 L142.6,8.6 M150.8,2.8 L150.8,6 M142.6,4.4 L150.8,4.4" fill="none" stroke="#e6e6e6" stroke-width="0.9" /><path d="M146.6,7.2 L149.8,7.2 L149.8,8.6 L148.9,8.6 L148.9,10.8 L147.5,10.8 L147.5,8.6 L146.6,8.6Z" fill="#f0c04a" stroke="none" stroke-width="0.8" /><line x1="155.00" y1="1.20" x2="155.00" y2="12.00" stroke="#4a5366" stroke-width="0.7" /><path d="M159,4.2 L169.2,4.2 M159,2.8 L159,5.6 M169.2,2.8 L169.2,5.6" fill="none" stroke="#e6e6e6" stroke-width="0.8" /><rect x="159.00" y="6.60" width="10.20" height="3.00" fill="#f0c04a" /><path d="M171.50,6.19 L173.70,6.19 L172.60,7.62Z" fill="#c8ccd4" stroke="none" stroke-width="0.8" /><path d="M179.4,3.4 L185.6,9.8" fill="none" stroke="#4aa3ec" stroke-width="1.1" /><circle cx="179.60" cy="3.60" r="1.30" fill="#4aa3ec" stroke="none" stroke-width="0.8" /><circle cx="185.40" cy="9.60" r="1.30" fill="#4aa3ec" stroke="none" stroke-width="0.8" /><circle cx="196.80" cy="5.60" r="2.20" fill="none" stroke="#dfe2e8" stroke-width="0.8" /><path d="M191.4,9.6 L194.6,6.6" fill="none" stroke="#dfe2e8" stroke-width="0.9" /><text x="208.3" y="10.3" font-family="Liberation Sans, sans-serif" font-size="9.6" fill="#e8e8e8" text-anchor="middle">A</text><path d="M220.6,6.6 L225,2.6 L229.4,6.6 L228,6.6 L228,10.6 L222,10.6 L222,6.6Z" fill="#e8e8e8" stroke="none" stroke-width="0.8" /><rect x="224.00" y="7.40" width="2.00" height="3.20" fill="#f0c04a" /><path d="M233.10,6.19 L235.30,6.19 L234.20,7.62Z" fill="#c8ccd4" stroke="none" stroke-width="0.8" /><circle cx="243.80" cy="6.60" r="2.80" fill="none" stroke="#9aa1ae" stroke-width="0.8" /><line x1="243.80" y1="2.40" x2="243.80" y2="10.80" stroke="#9aa1ae" stroke-width="0.6" /><line x1="239.60" y1="6.60" x2="248.00" y2="6.60" stroke="#9aa1ae" stroke-width="0.6" /><rect x="253.20" y="3.40" width="2.00" height="1.40" fill="#9aa1ae" /><rect x="255.80" y="3.50" width="4.60" height="1.00" fill="#dfe2e8" /><rect x="253.20" y="5.80" width="2.00" height="1.40" fill="#9aa1ae" /><rect x="255.80" y="5.90" width="4.60" height="1.00" fill="#dfe2e8" /><rect x="253.20" y="8.20" width="2.00" height="1.40" fill="#9aa1ae" /><rect x="255.80" y="8.30" width="4.60" height="1.00" fill="#dfe2e8" /><line x1="265.60" y1="1.20" x2="265.60" y2="12.00" stroke="#4a5366" stroke-width="0.7" /><rect x="269.40" y="3.20" width="5.40" height="4.60" fill="none" stroke="#cfd3da" stroke-width="0.8"/><rect x="271.60" y="5.60" width="5.40" height="4.60" fill="#3b4453" stroke="#cfd3da" stroke-width="0.8"/><path d="M274.4,7.6 L277.8,11 M277.8,7.6 L274.4,11" fill="none" stroke="#e8464a" stroke-width="1" /><path d="M282.2,4.6 L284.6,6.8 L282.2,9Z M285,4.6 L287.4,6.8 L285,9Z" fill="#e8e8e8" stroke="none" stroke-width="0.8" /><rect x="638.40" y="18.20" width="7.40" height="4.60" fill="#e8e8e8" rx="1"/><rect x="640.40" y="19.60" width="3.40" height="1.60" fill="#222933" /><path d="M648.60,20.25 L650.60,20.25 L649.60,21.55Z" fill="#c8ccd4" stroke="none" stroke-width="0.8" /><path d="M722.8,4.6 L720.6,6.8 L722.8,9Z" fill="#d0d3da" stroke="none" stroke-width="0.8" /><rect x="728.40" y="4.40" width="2.80" height="5.80" fill="#c9ccd3" rx="0.8"/><rect x="732.60" y="4.40" width="2.80" height="5.80" fill="#c9ccd3" rx="0.8"/><rect x="730.40" y="3.40" width="3.00" height="2.20" fill="#c9ccd3" /><circle cx="744.40" cy="4.60" r="1.90" fill="#3f8ae0" stroke="none" stroke-width="0.8" /><path d="M741,10.2 C741,7.2 747.8,7.2 747.8,10.2Z" fill="#3f8ae0" stroke="none" stroke-width="0.8" /><path d="M797.10,6.19 L799.30,6.19 L798.20,7.62Z" fill="#c8ccd4" stroke="none" stroke-width="0.8" /><path d="M806.6,3.6 L808,3.6 L809,8 L812.8,8 L813.6,4.8 L808.4,4.8" fill="none" stroke="#5aa9ee" stroke-width="0.9" /><circle cx="809.60" cy="9.60" r="0.80" fill="#d7dae0" stroke="none" stroke-width="0.8" /><circle cx="812.40" cy="9.60" r="0.80" fill="#d7dae0" stroke="none" stroke-width="0.8" /><line x1="819.20" y1="2.00" x2="819.20" y2="11.40" stroke="#4a5366" stroke-width="0.7" /><circle cx="828.40" cy="6.80" r="3.70" fill="#e6ebf2" stroke="none" stroke-width="0.8" /><text x="828.4" y="9.3" font-family="Liberation Sans, sans-serif" font-weight="bold" font-size="6.6" fill="#2266b8" text-anchor="middle">?</text><path d="M836.70,6.19 L838.90,6.19 L837.80,7.62Z" fill="#c8ccd4" stroke="none" stroke-width="0.8" /><line x1="873.80" y1="9.80" x2="878.80" y2="9.80" stroke="#e8e8e8" stroke-width="0.9" /><rect x="886.40" y="5.60" width="4.80" height="4.00" fill="none" stroke="#e8e8e8" stroke-width="0.9"/><path d="M888,5.4 L888,4 L892.8,4 L892.8,8 L891.4,8" fill="none" stroke="#e8e8e8" stroke-width="0.9" /><path d="M900.2,3.8 L906,9.8 M906,3.8 L900.2,9.8" fill="none" stroke="#f0f0f0" stroke-width="1.1" /><path d="M17.9,31 L17.9,44 L20.9,41.3 L23.3,47.2 L25.6,46.2 L23.3,40.6 L27.6,40.6Z" fill="#dcdcdc" stroke="none" stroke-width="0.8" /><path d="M39.10,72.47 L42.50,72.47 L40.80,74.68Z" fill="#e8e8e8" stroke="none" stroke-width="0.8" /><rect x="58.00" y="30.00" width="7.00" height="7.20" fill="#f0f0f0" rx="0.6"/><rect x="65.60" y="30.00" width="7.00" height="7.20" fill="#e2e2e2" rx="0.6"/><rect x="58.00" y="37.90" width="7.00" height="7.20" fill="#e8e8e8" rx="0.6"/><rect x="65.60" y="37.90" width="7.00" height="7.20" fill="#cfcfcf" rx="0.6"/><rect x="68.60" y="37.20" width="6.60" height="9.60" fill="#f4f4f4" stroke="#3b4453" stroke-width="0.5"/><rect x="69.60" y="38.40" width="4.60" height="3.20" fill="#5db2f2" /><line x1="70.00" y1="43.60" x2="73.80" y2="43.60" stroke="#555" stroke-width="0.6" /><line x1="70.00" y1="45.20" x2="73.80" y2="45.20" stroke="#555" stroke-width="0.6" /><rect x="56.20" y="48.20" width="20.20" height="17.80" fill="#384d63" stroke="#3d7199" stroke-width="0.7"/><rect x="60.00" y="48.90" width="13.60" height="16.80" fill="#e9e9e9" rx="0.6"/><rect x="61.40" y="50.60" width="10.00" height="6.40" fill="#6cbcf5" /><line x1="62.40" y1="60.20" x2="70.60" y2="60.20" stroke="#555" stroke-width="0.6" /><line x1="62.40" y1="63.00" x2="70.60" y2="63.00" stroke="#555" stroke-width="0.6" /><rect x="64.40" y="59.20" width="1.20" height="2.20" fill="#333" /><rect x="67.80" y="61.80" width="1.20" height="2.40" fill="#333" /><rect x="95.00" y="32.60" width="10.40" height="13.20" fill="#5a6372" rx="0.8"/><rect x="98.20" y="31.00" width="4.00" height="2.60" fill="#6a7382" rx="0.6"/><path d="M100.2,36.8 L106.4,36.8 L109.2,39.6 L109.2,48 L100.2,48Z" fill="#6f7887" stroke="#3b4453" stroke-width="0.5" /><line x1="100.80" y1="60.80" x2="102.80" y2="60.80" stroke="#7d8594" stroke-width="0.8" /><circle cx="119.20" cy="37.60" r="1.60" fill="none" stroke="#8d95a3" stroke-width="0.9" /><circle cx="125.20" cy="37.60" r="1.60" fill="none" stroke="#8d95a3" stroke-width="0.9" /><path d="M120,36.2 L125.6,31 M124.4,36.2 L118.8,31" fill="none" stroke="#8d95a3" stroke-width="0.9" /><rect x="119.40" y="44.40" width="4.20" height="5.60" fill="#6b7483" /><rect x="121.60" y="46.20" width="4.40" height="5.60" fill="#7a8392" stroke="#3b4453" stroke-width="0.4"/><rect x="117.60" y="56.40" width="6.40" height="7.80" fill="#f0f0f0" /><rect x="118.60" y="57.60" width="4.40" height="2.60" fill="#5db2f2" /><line x1="118.80" y1="61.40" x2="122.80" y2="61.40" stroke="#555" stroke-width="0.5" /><line x1="118.80" y1="62.80" x2="122.80" y2="62.80" stroke="#555" stroke-width="0.5" /><path d="M122,60.6 L126.2,64.6" fill="none" stroke="#f0c04a" stroke-width="1.8" /><path d="M125.2,63.6 L126.6,65" fill="none" stroke="#eee" stroke-width="1.6" /><path d="M136,32.6 L136,38.4 M135,32.6 L137,32.6 M135,38.4 L137,38.4 M142.4,32.6 L142.4,38.4 M141.4,32.6 L143.4,32.6 M141.4,38.4 L143.4,38.4" fill="none" stroke="#e8e8e8" stroke-width="0.9" /><path d="M137,35.5 L141.4,33.4 L141.4,37.6Z" fill="#e8e8e8" stroke="none" stroke-width="0.8" /><path d="M170.80,34.63 L173.60,34.63 L172.20,36.45Z" fill="#d7dae0" stroke="none" stroke-width="0.8" /><circle cx="138.60" cy="49.00" r="3.40" fill="#d8d8d8" stroke="none" stroke-width="0.8" /><path d="M137,44.8 L143.4,44.8 L143.4,51" fill="none" stroke="#6ab8f2" stroke-width="1.2" /><path d="M139.4,45.6 A3.4,3.4 0 0 1 142,48.2" fill="none" stroke="#e8464a" stroke-width="1" /><path d="M167.60,47.53 L170.40,47.53 L169.00,49.35Z" fill="#d7dae0" stroke="none" stroke-width="0.8" /><circle cx="138.00" cy="62.40" r="3.20" fill="#5fb3f3" stroke="none" stroke-width="0.8" /><rect x="137.60" y="57.20" width="5.80" height="5.80" fill="#6cbcf5" rx="0.8"/><path d="M161.80,60.33 L164.60,60.33 L163.20,62.15Z" fill="#d7dae0" stroke="none" stroke-width="0.8" /><rect x="178.00" y="31.60" width="3.60" height="7.20" fill="#6b7483" /><path d="M187,35.2 L182.4,35.2 M184.4,33.2 L182.2,35.2 L184.4,37.2" fill="none" stroke="#7a8392" stroke-width="1.1" /><rect x="183.60" y="31.80" width="3.20" height="2.00" fill="#5a6372" /><rect x="181.40" y="45.00" width="3.00" height="3.00" fill="#c9ccd3" /><rect x="180.40" y="49.00" width="6.60" height="2.60" fill="#c9ccd3" /><path d="M179,44.4 L179,52.6 M177.6,51 L179,52.8 L180.4,51" fill="none" stroke="#4aa3ec" stroke-width="0.8" /><path d="M178.8,57.4 L178.8,65 L186.8,65" fill="none" stroke="#6ab8f2" stroke-width="1.6" /><rect x="178.60" y="57.00" width="2.40" height="2.40" fill="#e0e0e0" /><rect x="184.60" y="62.40" width="2.40" height="2.40" fill="#e0e0e0" /><path d="M181.4,62.8 L185.6,58.6" fill="none" stroke="#f0c04a" stroke-width="1.8" /><path d="M185.6,58.6 L186.8,57.4" fill="none" stroke="#e8464a" stroke-width="1.8" /><path d="M191.8,32.4 L198.4,33.4 L199.8,38.8 L193,37.6Z" fill="#e9eef5" stroke="#3b4453" stroke-width="0.3" /><path d="M193.4,33.8 L197.4,34.4 L198.2,37.2 L194.2,36.6Z" fill="#4aa3ec" stroke="none" stroke-width="0.8" /><rect x="191.80" y="44.60" width="3.40" height="3.40" fill="none" stroke="#c9ccd3" stroke-width="0.7"/><rect x="196.00" y="48.60" width="3.80" height="3.40" fill="#c9ccd3" /><line x1="192.00" y1="51.40" x2="194.40" y2="51.40" stroke="#c9ccd3" stroke-width="0.9" /><path d="M203.60,47.53 L206.40,47.53 L205.00,49.35Z" fill="#d7dae0" stroke="none" stroke-width="0.8" /><path d="M192.6,59.4 L195.8,57.2 L197.4,59.4 L194.2,61.6Z" fill="#9aa1ae" stroke="none" stroke-width="0.8" /><path d="M195.8,60.4 L199.6,65" fill="none" stroke="#b5714a" stroke-width="1.5" /><path d="M219.6,31 L219.6,42.4 M233.4,31 L233.4,38 M219.6,33.8 L233.4,33.8 M232.6,45.4 L232.6,47.8" fill="none" stroke="#e8e8e8" stroke-width="0.8" /><path d="M229.6,38 L236,38 L236,39.6 L234.8,39.6 L235.6,43 L236.6,43 L236.6,44.8 L229,44.8 L229,43 L230,43 L230.8,39.6 L229.6,39.6Z" fill="#f0c04a" stroke="none" stroke-width="0.8" /><line x1="249.40" y1="31.00" x2="249.40" y2="45.20" stroke="#e8e8e8" stroke-width="0.8" /><rect x="250.80" y="31.40" width="5.00" height="7.80" fill="#6cbcf5" /><rect x="250.80" y="40.00" width="11.60" height="4.90" fill="#dcdcdc" /><path d="M284.8,32.4 L274.6,32.4 A6,6 0 0 0 274.6,44.4 L284.8,44.4" fill="none" stroke="#4aa3ec" stroke-width="1.1" /><path d="M284.8,35 L275.6,35 A3.6,3.4 0 0 0 275.6,41.8 L284.8,41.8" fill="none" stroke="#e8e8e8" stroke-width="1" /><path d="M294.6,31.4 L294.6,43.8 L289,43.8Z" fill="#dcdcdc" stroke="none" stroke-width="0.8" /><line x1="295.50" y1="30.20" x2="295.50" y2="46.00" stroke="#3e9b62" stroke-width="0.9" /><path d="M296.4,31.4 L296.4,43.8 L301.4,43.8Z" fill="#6cbcf5" stroke="none" stroke-width="0.8" /><path d="M299.8,38.6 L299.8,46 L301.6,44.4 L302.8,47 L304,46.4 L302.8,43.8 L305.2,43.8Z" fill="#f4f4f4" stroke="#3b4453" stroke-width="0.3" /><path d="M316,31.4 L316,43.8 L310,43.8Z" fill="#dcdcdc" stroke="none" stroke-width="0.8" /><line x1="316.90" y1="30.20" x2="316.90" y2="46.00" stroke="#4aa3ec" stroke-width="0.9" /><path d="M317.8,31.4 L317.8,43.8 L322.8,43.8Z" fill="#6cbcf5" stroke="none" stroke-width="0.8" /><path d="M320,45.4 L325.4,39.6" fill="none" stroke="#f0c04a" stroke-width="2.4" /><path d="M325.4,39.6 L326.6,38.4" fill="none" stroke="#e8464a" stroke-width="2.4" /><path d="M319.2,46.4 L320.4,45" fill="none" stroke="#f1e2c0" stroke-width="1.6" /><path d="M250.5,57.6 L260.9,57.6 M255.7,52.4 L255.7,62.800000000000004" fill="none" stroke="#f0f0f0" stroke-width="1.1" /><path d="M249.3,57.6 l2.2,-2.2 l0,4.4Z M262.09999999999997,57.6 l-2.2,-2.2 l0,4.4Z M255.7,51.199999999999996 l-2.2,2.2 l4.4,0Z M255.7,64.0 l-2.2,-2.2 l4.4,0Z" fill="#f0f0f0" stroke="none" stroke-width="0.8" /><circle cx="272.60" cy="53.20" r="3.30" fill="#d0d0d0" stroke="none" stroke-width="0.8" /><circle cx="275.60" cy="61.40" r="3.70" fill="#6cbcf5" stroke="none" stroke-width="0.8" /><circle cx="281.00" cy="61.40" r="3.70" fill="#6cbcf5" stroke="none" stroke-width="0.8" /><path d="M277.6,51.8 L281.4,51.8 L281.4,55" fill="none" stroke="#e8e8e8" stroke-width="0.8" /><path d="M279.9,54 L281.4,56 L282.9,54Z" fill="#e8e8e8" stroke="none" stroke-width="0.8" /><path d="M298.6,50.6 A7.4,7.4 0 1 0 304.6,57.6" fill="none" stroke="#e0e0e0" stroke-width="0.9" /><path d="M298,48.6 L301.4,50.6 L298,52.6Z" fill="#e8e8e8" stroke="none" stroke-width="0.8" /><rect x="310.00" y="53.00" width="7.00" height="2.00" fill="#d8d8d8" /><path d="M317,54 L322.4,54 L322.4,59" fill="none" stroke="#6cbcf5" stroke-width="2" /><rect x="321.40" y="59.00" width="2.00" height="6.40" fill="#d8d8d8" /><path d="M315,50.4 L321,50.4" fill="none" stroke="#e8e8e8" stroke-width="0.7" /><path d="M320,49.4 L321.6,50.4 L320,51.4Z" fill="#e8e8e8" stroke="none" stroke-width="0.8" /><path d="M326,63 L326,56" fill="none" stroke="#e8e8e8" stroke-width="0.7" /><path d="M325,57 L326,55.4 L327,57Z" fill="#e8e8e8" stroke="none" stroke-width="0.8" /><rect x="332.00" y="33.80" width="3.00" height="2.20" fill="#e8e8e8" /><rect x="336.80" y="33.80" width="3.00" height="2.20" fill="#e8e8e8" /><line x1="335.90" y1="32.60" x2="335.90" y2="37.20" stroke="#e8464a" stroke-width="0.8" /><rect x="332.00" y="44.00" width="3.40" height="3.40" fill="#6cbcf5" /><rect x="336.60" y="44.00" width="3.40" height="3.40" fill="#6cbcf5" /><rect x="332.00" y="48.60" width="3.40" height="3.40" fill="#6cbcf5" /><rect x="336.60" y="48.60" width="3.40" height="3.40" fill="#6cbcf5" /><path d="M332,58.8 L338.6,58.8 M338.6,56.4 L338.6,65 M334,62.2 L338.6,62.2" fill="none" stroke="#e8e8e8" stroke-width="0.9" /><rect x="345.00" y="33.80" width="2.60" height="2.20" fill="#e8e8e8" /><rect x="350.40" y="33.80" width="2.60" height="2.20" fill="#e8e8e8" /><line x1="349.00" y1="32.80" x2="349.00" y2="37.00" stroke="#e8464a" stroke-width="0.7" /><rect x="345.00" y="44.00" width="8.00" height="8.00" fill="#6cbcf5" /><rect x="345.00" y="47.60" width="4.40" height="4.40" fill="#e8e8e8" /><path d="M352.6,56.4 L352.6,65" fill="none" stroke="#e8e8e8" stroke-width="0.9" /><line x1="346.00" y1="58.20" x2="352.00" y2="58.20" stroke="#e8e8e8" stroke-width="0.9" /><line x1="345.00" y1="60.60" x2="352.00" y2="60.60" stroke="#6cbcf5" stroke-width="0.9" /><line x1="346.00" y1="63.00" x2="352.00" y2="63.00" stroke="#6cbcf5" stroke-width="0.9" /><path d="M359.6,34.8 L363,34.8" fill="none" stroke="#c9ccd3" stroke-width="0.8" /><rect x="363.00" y="32.80" width="3.00" height="4.00" fill="#c9ccd3" /><path d="M364.2,35.6 L367.2,38.6 M367.2,35.6 L364.2,38.6" fill="none" stroke="#e8464a" stroke-width="0.9" /><path d="M359.6,47.8 L363,47.8" fill="none" stroke="#c9ccd3" stroke-width="0.8" /><rect x="363.00" y="45.60" width="1.00" height="4.40" fill="#c9ccd3" /><rect x="364.00" y="46.40" width="3.00" height="2.80" fill="#c9ccd3" /><path d="M360,57.6 L366.4,64 M366.4,57.6 L360,64" fill="none" stroke="#e8464a" stroke-width="1.4" /><circle cx="379.20" cy="33.60" r="2.60" fill="#6b7483" stroke="none" stroke-width="0.8" /><rect x="378.20" y="36.00" width="2.00" height="2.20" fill="#6b7483" /><path d="M386.30,34.80 L388.50,34.80 L387.40,36.23Z" fill="#aeb4c0" stroke="none" stroke-width="0.8" /><path d="M393.4,34.2 L396.4,32.4 L401.6,32.4 L401.6,37 L398.6,39 L393.4,39Z" fill="#5d6675" stroke="none" stroke-width="0.8" /><path d="M376.2,52.2 L382.6,45.4" fill="none" stroke="#6b7483" stroke-width="1.4" /><path d="M386.30,47.70 L388.50,47.70 L387.40,49.12Z" fill="#aeb4c0" stroke="none" stroke-width="0.8" /><rect x="393.00" y="45.00" width="8.60" height="1.20" fill="#d7dae0" /><rect x="393.00" y="47.00" width="6.00" height="0.90" fill="#9aa1ae" /><path d="M400.2,47.4 L400.2,51.6 M398.6,50 L400.2,52 L401.8,50" fill="none" stroke="#4aa3ec" stroke-width="1" /><path d="M375.6,59.4 L378.6,57.6 L382.8,59 L382.8,63 L379.6,64.8 L375.6,63Z" fill="#5d6675" stroke="none" stroke-width="0.8" /><path d="M410.6,36 L425.6,36 M410.6,33.4 L410.6,38.4 M425.6,33.4 L425.6,38.4" fill="none" stroke="#e8e8e8" stroke-width="0.9" /><rect x="410.20" y="39.20" width="15.80" height="3.80" fill="#f0c04a" /><line x1="430.40" y1="38.20" x2="432.00" y2="38.20" stroke="#e8e8e8" stroke-width="0.8" /><path d="M414.2,52.4 L422.6,61" fill="none" stroke="#4aa3ec" stroke-width="0.9" /><path d="M409.8,55.4 L416.4,49 M418.6,65 L426,58" fill="none" stroke="#d7dae0" stroke-width="0.8" /><circle cx="414.30" cy="52.50" r="0.90" fill="#4aa3ec" stroke="none" stroke-width="0.8" /><circle cx="422.50" cy="60.90" r="0.90" fill="#4aa3ec" stroke="none" stroke-width="0.8" /><line x1="430.40" y1="57.20" x2="432.00" y2="57.20" stroke="#e8e8e8" stroke-width="0.8" /><path d="M440,32 L441.6,30.2 L448.6,30.2 L448.6,37.2 L447,38.9 L440,38.9Z" fill="#6cbcf5" stroke="none" stroke-width="0.8" /><path d="M440,32 L447,32 L447,38.9 M447,32 L448.6,30.2" fill="none" stroke="#a8d8fa" stroke-width="0.4" /><rect x="440.00" y="39.20" width="6.80" height="6.60" fill="#e0e0e0" /><path d="M447.6,40.6 L449.4,38.8 L455.4,38.8 L455.4,44 L453.6,45.8 L447.6,45.8Z" fill="#e8e8e8" stroke="none" stroke-width="0.8" /><path d="M447.6,40.6 L453.6,40.6 L453.6,45.8" fill="none" stroke="#bdbdbd" stroke-width="0.4" /><path d="M461.4,31.4 L459.2,31.4 L459.2,46.6 L461.4,46.6 M473,31.4 L475.2,31.4 L475.2,46.6 L473,46.6" fill="none" stroke="#f0f0f0" stroke-width="0.9" /><circle cx="465.20" cy="37.40" r="3.80" fill="#d8d8d8" stroke="none" stroke-width="0.8" /><rect x="465.60" y="38.40" width="6.60" height="6.60" fill="#e4e4e4" stroke="#9a9a9a" stroke-width="0.4"/><path d="M472,29.4 L472.9,32.4 L475.8,31.2 L474,33.8 L476.6,35.2 L473.6,35.4 L473.6,38.4 L472,35.8 L469.8,37.6 L470.6,34.8 L467.8,33.8 L470.8,33Z" fill="#f5c542" stroke="none" stroke-width="0.8" /><path d="M440,52.4 L449,55.4 L449,65.2 L440,62Z" fill="#e2e2e2" stroke="none" stroke-width="0.8" /><path d="M443.4,50.6 L452.4,53.6 L452.4,63.4 L449,62.2 L449,55.4 L441.6,52.8Z" fill="#5db2f2" stroke="none" stroke-width="0.8" /><path d="M446.6,49.6 L455.6,52.6 L455.6,62 L452.4,60.8 L452.4,53.6 L445,51Z" fill="#ececec" stroke="none" stroke-width="0.8" /><rect x="460.00" y="50.00" width="3.60" height="3.40" fill="#646d7c" /><rect x="472.40" y="50.00" width="3.60" height="3.40" fill="#646d7c" /><rect x="459.60" y="61.00" width="5.40" height="3.60" fill="#646d7c" /><path d="M473.2,58.4 L476,61.2 L473.2,64 L470.4,61.2Z" fill="#646d7c" stroke="none" stroke-width="0.8" /><path d="M464.6,51.8 L471,51.8 M461.8,54.6 L461.8,59.4 M465.4,55 L469.8,59" fill="none" stroke="#646d7c" stroke-width="0.7" /><path d="M110.6,95.19999999999999 L115.4,100.0 M115.4,95.19999999999999 L110.6,100.0" fill="none" stroke="#e0e3e8" stroke-width="0.9" /><path d="M13.4,121.6 L18.6,114.4 L24,121.2 L24,129.2 L13.8,129.4Z" fill="#f6f4ee" stroke="none" stroke-width="0.8" /><path d="M18.4,113.2 L24.6,113.5 L29.3,120 L24.1,121.6 L18.6,114.6 L13.2,122 L12.6,121.2Z" fill="#9b9ea3" stroke="none" stroke-width="0.8" /><path d="M24,121.5 L28.7,120.2 L28.7,127.6 L24,129.2Z" fill="#d9d7d0" stroke="none" stroke-width="0.8" /><rect x="17.40" y="123.20" width="2.70" height="6.00" fill="#e5b73a" /><path d="M108.70,120.97 L111.70,120.97 L110.20,122.92Z" fill="#8e96a5" stroke="none" stroke-width="0.8" /><path d="M68.5,143.85000000000002 L70.4,145.75 L72.30000000000001,143.85000000000002" fill="none" stroke="#8e96a5" stroke-width="0.8" /><rect x="77.00" y="142.20" width="4.60" height="5.20" fill="#dfe2e8" /><rect x="77.80" y="143.00" width="1.60" height="1.60" fill="#3b4453" /><rect x="79.80" y="143.00" width="1.20" height="1.60" fill="#3b4453" /><rect x="77.80" y="145.20" width="3.20" height="0.80" fill="#3b4453" /><path d="M103.2,156.2 L104.6,157.2 L103.2,158.2" fill="none" stroke="#c8ccd4" stroke-width="0.6" /><path d="M109.5,160.54999999999998 L111.4,158.65 L113.30000000000001,160.54999999999998" fill="none" stroke="#c8ccd4" stroke-width="0.8" /><path d="M109.5,264.45 L111.4,266.34999999999997 L113.30000000000001,264.45" fill="none" stroke="#c8ccd4" stroke-width="0.8" /><path d="M4,273.6 L9.8,273.6 M4,276 L9.8,276 M4,278.4 L9.8,278.4" fill="none" stroke="#e8f1fb" stroke-width="0.8" /><rect x="5.40" y="272.80" width="1.10" height="1.60" fill="#e8f1fb" /><rect x="7.60" y="275.20" width="1.10" height="1.60" fill="#e8f1fb" /><rect x="5.40" y="277.60" width="1.10" height="1.60" fill="#e8f1fb" /><text x="16" y="275.4" font-family="Liberation Sans, sans-serif" font-size="4.2" fill="#cfe6fb">A</text><text x="16" y="280" font-family="Liberation Sans, sans-serif" font-size="4.2" fill="#cfe6fb">Z</text><path d="M22,272.4 L22,279.6 M20.8,278.2 L22,279.8 L23.2,278.2" fill="none" stroke="#6cbcf5" stroke-width="0.8" /><text x="29" y="275.4" font-family="Liberation Sans, sans-serif" font-size="4.2" fill="#cfe6fb">Z</text><text x="29" y="280" font-family="Liberation Sans, sans-serif" font-size="4.2" fill="#cfe6fb">A</text><path d="M35,272.4 L35,279.6 M33.8,278.2 L35,279.8 L36.2,278.2" fill="none" stroke="#6cbcf5" stroke-width="0.8" /><path d="M110.6,285.8 L115.4,290.59999999999997 M115.4,285.8 L110.6,290.59999999999997" fill="none" stroke="#e0e3e8" stroke-width="0.9" /><circle cx="12.60" cy="303.60" r="2.20" fill="none" stroke="#aeb4c0" stroke-width="0.8" /><path d="M14.2,305.2 L16.4,307.4" fill="none" stroke="#aeb4c0" stroke-width="0.9" /><line x1="3.80" y1="319.70" x2="8.00" y2="319.70" stroke="#dfe2e8" stroke-width="0.9" /><line x1="12.00" y1="330.50" x2="16.20" y2="330.50" stroke="#dfe2e8" stroke-width="0.9" /><line x1="12.00" y1="351.90" x2="16.20" y2="351.90" stroke="#dfe2e8" stroke-width="0.9" /><line x1="3.80" y1="384.40" x2="8.00" y2="384.40" stroke="#dfe2e8" stroke-width="0.9" /><line x1="5.90" y1="382.30" x2="5.90" y2="386.50" stroke="#dfe2e8" stroke-width="0.9" /><line x1="3.80" y1="405.60" x2="8.00" y2="405.60" stroke="#dfe2e8" stroke-width="0.9" /><line x1="5.90" y1="403.50" x2="5.90" y2="407.70" stroke="#dfe2e8" stroke-width="0.9" /><line x1="3.80" y1="415.90" x2="8.00" y2="415.90" stroke="#dfe2e8" stroke-width="0.9" /><line x1="5.90" y1="413.80" x2="5.90" y2="418.00" stroke="#dfe2e8" stroke-width="0.9" /><line x1="5.60" y1="325.00" x2="5.60" y2="352.00" stroke="#8e96a5" stroke-width="0.6" stroke-dasharray="0.7 0.9"/><line x1="5.60" y1="330.50" x2="10.40" y2="330.50" stroke="#8e96a5" stroke-width="0.6" stroke-dasharray="0.7 0.9"/><line x1="5.60" y1="351.90" x2="10.40" y2="351.90" stroke="#8e96a5" stroke-width="0.6" stroke-dasharray="0.7 0.9"/><line x1="14.00" y1="341.20" x2="27.00" y2="341.20" stroke="#8e96a5" stroke-width="0.6" stroke-dasharray="0.7 0.9"/><line x1="14.00" y1="362.80" x2="27.00" y2="362.80" stroke="#8e96a5" stroke-width="0.6" stroke-dasharray="0.7 0.9"/><path d="M12.2,317.4 L12.2,315.6 L14,315.6 M19,315.6 L20.8,315.6 L20.8,317.4 M20.8,321.8 L20.8,323.6 L19,323.6 M14,323.6 L12.2,323.6 L12.2,321.8" fill="none" stroke="#e8e8e8" stroke-width="0.8" /><path d="M14,318.4 L15.2,317.2 L19,317.2 L19,321 L17.8,322.2 L14,322.2Z" fill="#f0f0f0" stroke="none" stroke-width="0.8" /><path d="M14,318.4 L17.8,318.4 L17.8,322.2 M17.8,318.4 L19,317.2" fill="none" stroke="#777" stroke-width="0.4" /><rect x="29.60" y="337.20" width="7.80" height="8.00" fill="#d9d9d9" stroke="#f5f5f5" stroke-width="0.7" stroke-dasharray="0.9 0.5"/><rect x="29.60" y="358.80" width="7.80" height="8.00" fill="#d9d9d9" stroke="#f5f5f5" stroke-width="0.7" stroke-dasharray="0.9 0.5"/><rect x="12.40" y="370.00" width="7.20" height="7.60" fill="#dcdcdc" /><rect x="12.40" y="370.00" width="7.20" height="1.60" fill="#f4f4f4" /><rect x="13.20" y="372.60" width="2.00" height="1.20" fill="#666" /><rect x="13.20" y="374.60" width="2.00" height="1.20" fill="#666" /><rect x="12.40" y="380.60" width="8.00" height="7.40" fill="#f0f0f0" /><line x1="12.40" y1="382.60" x2="20.40" y2="382.60" stroke="#444" stroke-width="0.5" /><line x1="12.40" y1="384.60" x2="20.40" y2="384.60" stroke="#444" stroke-width="0.5" /><line x1="12.40" y1="386.40" x2="20.40" y2="386.40" stroke="#444" stroke-width="0.5" /><line x1="15.00" y1="382.60" x2="15.00" y2="388.00" stroke="#444" stroke-width="0.5" /><line x1="17.80" y1="382.60" x2="17.80" y2="388.00" stroke="#444" stroke-width="0.5" /><path d="M12.6,391.4 L17.2,391.4 L19.6,393.8 L19.6,398.8 L12.6,398.8Z" fill="#eeeeee" stroke="none" stroke-width="0.8" /><path d="M14.2,396.8 L16,394.6 L17.8,396.8" fill="none" stroke="#555" stroke-width="0.6" /><path d="M17.2,391.4 L17.2,393.8 L19.6,393.8" fill="none" stroke="#777" stroke-width="0.4" /><rect x="12.60" y="401.80" width="7.00" height="7.60" fill="#f0f0f0" /><rect x="13.80" y="405.00" width="2.60" height="1.20" fill="#444" /><rect x="13.80" y="403.00" width="4.60" height="0.80" fill="#888" /><path d="M14.4,412 L12.6,412 L12.6,419.8 L14.4,419.8 M18.4,412 L20.2,412 L20.2,419.8 L18.4,419.8" fill="none" stroke="#f0f0f0" stroke-width="0.8" /><circle cx="15.60" cy="415.00" r="1.60" fill="#e0e0e0" stroke="none" stroke-width="0.8" /><rect x="15.60" y="415.60" width="3.00" height="3.00" fill="#f4f4f4" stroke="#666" stroke-width="0.3"/><path d="M13.2,428.8 L15.8,426.2 M16.4,427.6 L19,425" fill="none" stroke="#e89a4c" stroke-width="1.3" stroke-linecap="round"/><path d="M122.5375,97.5 L126.3,93.7375 L130.0625,97.5 L129.2025,97.5 L129.2025,101.2625 L123.3975,101.2625 L123.3975,97.5Z" fill="#f3f1ea" stroke="none" stroke-width="0.8" /><path d="M122.215,97.715 L126.3,93.52250000000001 L130.385,97.715 L129.31,97.8225 L126.3,95.0275 L123.29,97.8225Z" fill="#9aa0a8" stroke="none" stroke-width="0.8" /><rect x="124.80" y="98.36" width="1.72" height="2.90" fill="#e9b93c" /><path d="M179.0,95.6 L183.39999999999998,100.0 M183.39999999999998,95.6 L179.0,100.0" fill="none" stroke="#e0e3e8" stroke-width="0.9" /><circle cx="192.40" cy="97.80" r="2.30" fill="none" stroke="#aeb4c0" stroke-width="0.7" /><line x1="192.40" y1="94.20" x2="192.40" y2="101.40" stroke="#aeb4c0" stroke-width="0.6" /><line x1="188.80" y1="97.80" x2="196.00" y2="97.80" stroke="#aeb4c0" stroke-width="0.6" /><path d="M903,96.3 L908,96.3" fill="none" stroke="#c8ccd4" stroke-width="0.8" /><path d="M903.2,98 L907.8,98 L905.5,100.3Z" fill="#d7dae0" stroke="none" stroke-width="0.8" /><path d="M902.4,109.69999999999999 L904.6,107.5 L906.8000000000001,109.69999999999999" fill="none" stroke="#dfe2e8" stroke-width="1" /><path d="M902.4,456.7 L904.6,458.90000000000003 L906.8000000000001,456.7" fill="none" stroke="#dfe2e8" stroke-width="1" /><path d="M895,465 L897.4,467.6 L895,470.2" fill="none" stroke="#dfe2e8" stroke-width="0.9" /><rect x="903.80" y="469.60" width="1.00" height="1.00" fill="#aeb4c0" /><rect x="906.00" y="469.60" width="1.00" height="1.00" fill="#aeb4c0" /><rect x="906.00" y="467.40" width="1.00" height="1.00" fill="#aeb4c0" /><rect x="163.40" y="464.40" width="8.60" height="6.20" fill="#9aa1ae" /><line x1="165.40" y1="464.40" x2="165.40" y2="470.60" stroke="#6b7483" stroke-width="0.4" /><line x1="167.60" y1="464.40" x2="167.60" y2="470.60" stroke="#6b7483" stroke-width="0.4" /><line x1="169.80" y1="464.40" x2="169.80" y2="470.60" stroke="#6b7483" stroke-width="0.4" /><line x1="163.40" y1="466.40" x2="172.00" y2="466.40" stroke="#6b7483" stroke-width="0.4" /><line x1="163.40" y1="468.40" x2="172.00" y2="468.40" stroke="#6b7483" stroke-width="0.4" /><circle cx="181.40" cy="467.60" r="4.00" fill="#e8f3fc" stroke="none" stroke-width="0.8" /><rect x="179.00" y="465.20" width="1.50" height="1.50" fill="#3f8ae0" /><rect x="182.00" y="465.20" width="1.50" height="1.50" fill="#3f8ae0" /><rect x="180.50" y="467.00" width="1.50" height="1.50" fill="#3f8ae0" /><rect x="183.40" y="467.00" width="1.50" height="1.50" fill="#3f8ae0" /><rect x="179.00" y="468.80" width="1.50" height="1.50" fill="#3f8ae0" /><rect x="182.00" y="468.80" width="1.50" height="1.50" fill="#3f8ae0" /><circle cx="194.00" cy="466.40" r="2.40" fill="#f3c440" stroke="none" stroke-width="0.8" /><circle cx="197.40" cy="468.80" r="2.20" fill="#52cdee" stroke="none" stroke-width="0.8" /><circle cx="207.60" cy="466.80" r="3.00" fill="#f4f4f4" stroke="none" stroke-width="0.8" /><path d="M205,470.8 L212,470.8" fill="none" stroke="#9aa1ae" stroke-width="1" /><circle cx="211.60" cy="468.80" r="2.00" fill="#52cdee" stroke="none" stroke-width="0.8" /><path d="M219,466.4 L222,464.6 L225,466.4 L225,469.4 L222,471 L219,469.4Z" fill="#e0e0e0" stroke="none" stroke-width="0.8" /><circle cx="224.80" cy="468.60" r="2.00" fill="#52cdee" stroke="none" stroke-width="0.8" /><path d="M232.6,464 L232.6,470.6 M230.6,466 L239.4,466" fill="none" stroke="#e0e0e0" stroke-width="0.7" /><rect x="234.20" y="466.80" width="4.00" height="3.40" fill="#52cdee" /><path d="M236.8,468.2 L240,471.4 M240,468.2 L236.8,471.4" fill="none" stroke="#e8464a" stroke-width="0.9" /><path d="M247,464 L247,470.6 M245,466 L253.8,466" fill="none" stroke="#e0e0e0" stroke-width="0.7" /><rect x="248.60" y="466.80" width="4.20" height="3.60" fill="#52cdee" /><path d="M258.2,467.6 L262.4,464 L266.6,467.6 L265.4,467.6 L265.4,471 L259.4,471 L259.4,467.6Z" fill="#e8e8e8" stroke="none" stroke-width="0.8" /><rect x="262.80" y="468.00" width="3.60" height="3.00" fill="#52cdee" /><circle cx="273.40" cy="468.00" r="1.80" fill="none" stroke="#9aa1ae" stroke-width="0.7" /><circle cx="277.60" cy="467.40" r="1.80" fill="none" stroke="#9aa1ae" stroke-width="0.7" /><circle cx="289.60" cy="466.60" r="2.60" fill="#52cdee" stroke="none" stroke-width="0.8" /><rect x="288.60" y="469.00" width="2.00" height="1.80" fill="#dfe2e8" /><rect x="299.20" y="464.60" width="4.20" height="5.40" fill="#e0e0e0" /><rect x="303.00" y="466.40" width="3.60" height="4.40" fill="#b8bcc6" /><rect x="312.00" y="464.60" width="4.40" height="6.00" fill="#d8d8d8" /><line x1="312.80" y1="465.00" x2="312.80" y2="470.60" stroke="#e8464a" stroke-width="0.7" /><circle cx="319.00" cy="467.60" r="2.20" fill="#f3c440" stroke="none" stroke-width="0.8" /><rect x="318.00" y="469.40" width="2.00" height="1.60" fill="#dfe2e8" /><path d="M327,466.6 L330,465 L333.6,466.2 L333.6,469.6 L330.4,471 L327,469.8Z" fill="#f0f0f0" stroke="none" stroke-width="0.8" /><rect x="329.80" y="466.80" width="3.80" height="3.00" fill="#3f8ae0" /><path d="M340,470.8 L340,464.6 L347.6,464.6 L347.6,467" fill="none" stroke="#e8e8e8" stroke-width="0.8" /><circle cx="346.60" cy="468.80" r="2.00" fill="#52cdee" stroke="none" stroke-width="0.8" /><path d="M355.6,465.4 L353.6,467.6 L355.6,469.8" fill="none" stroke="#8e96a5" stroke-width="0.8" /><path d="M511.4,478.4 L513,480.0 L514.6,478.4" fill="none" stroke="#6b7483" stroke-width="0.8" /><path d="M396.4,480.6 L396.4,475.8 L399.4,475.8" fill="none" stroke="#8cc8f5" stroke-width="1.2" /><rect x="398.00" y="477.80" width="2.60" height="5.80" fill="#5fc774" /><circle cx="401.20" cy="476.40" r="1.70" fill="#f0a05a" stroke="none" stroke-width="0.8" /><path d="M400.8,482.8 L403.4,479.6" fill="none" stroke="#4aa3ec" stroke-width="1.3" /><path d="M520.4,482.6 L522.4,476.4 L526,476.4 L527.4,479 L524.6,479 L524.6,482.6Z" fill="#8e96a5" stroke="none" stroke-width="0.8" /><text x="527.8" y="482.6" font-family="Liberation Sans, sans-serif" font-size="4.6" fill="#c8ccd4">:0</text><rect x="543.00" y="475.60" width="9.00" height="8.00" fill="#f0f0f0" rx="0.6"/><rect x="544.20" y="477.20" width="1.00" height="0.90" fill="#333" /><line x1="546.00" y1="477.60" x2="550.80" y2="477.60" stroke="#333" stroke-width="0.7" /><rect x="544.20" y="479.20" width="1.00" height="0.90" fill="#333" /><line x1="546.00" y1="479.60" x2="550.80" y2="479.60" stroke="#333" stroke-width="0.7" /><rect x="544.20" y="481.20" width="1.00" height="0.90" fill="#333" /><line x1="546.00" y1="481.60" x2="550.80" y2="481.60" stroke="#333" stroke-width="0.7" /><rect x="557.40" y="475.60" width="6.40" height="6.40" fill="#8e96a5" /><line x1="558.20" y1="477.40" x2="563.00" y2="477.40" stroke="#3b4453" stroke-width="0.5" /><line x1="558.20" y1="479.00" x2="563.00" y2="479.00" stroke="#3b4453" stroke-width="0.5" /><line x1="558.20" y1="480.60" x2="563.00" y2="480.60" stroke="#3b4453" stroke-width="0.5" /><path d="M556,482.8 L559,482.8" fill="none" stroke="#8e96a5" stroke-width="0.8" /><path d="M671.4,478.59999999999997 L673,480.2 L674.6,478.59999999999997" fill="none" stroke="#6b7483" stroke-width="0.8" /><path d="M796.6,475.6 h2.6 a1,1 0 0 1 0,2 h-2.6 a1,1 0 0 1 0,-2Z M800.4,475.6 h2.6 a1,1 0 0 1 0,2 h-2.6 a1,1 0 0 1 0,-2Z" fill="none" stroke="#e89a4c" stroke-width="0.7" /><path d="M800.2,477.6 l0,5.4 l1.3,-1.1 l0.9,2.0 l1.0,-0.5 l-0.9,-1.9 l1.7,0Z" fill="#f4f4f4" stroke="none" stroke-width="0.8" /><path d="M808.8,478.2 L812,475.6 L812,477 L814,477 L814,481.4 L809.6,482.4Z" fill="#58a6e8" stroke="none" stroke-width="0.8" /><path d="M813.2,474.8 L816.2,477.8 M816.2,474.8 L813.2,477.8" fill="none" stroke="#e8464a" stroke-width="0.9" /><path d="M812.8,478.4 l0,5.4 l1.3,-1.1 l0.9,2.0 l1.0,-0.5 l-0.9,-1.9 l1.7,0Z" fill="#f4f4f4" stroke="none" stroke-width="0.8" /><rect x="822.00" y="475.00" width="3.80" height="1.40" fill="#9aa1ae" /><rect x="823.00" y="476.40" width="1.80" height="2.60" fill="#9aa1ae" /><rect x="821.80" y="478.80" width="4.20" height="1.00" fill="#9aa1ae" /><path d="M825,478.4 l0,5.4 l1.3,-1.1 l0.9,2.0 l1.0,-0.5 l-0.9,-1.9 l1.7,0Z" fill="#f4f4f4" stroke="none" stroke-width="0.8" /><path d="M834.2,477 L838,475.4 L838,482 L834.2,483.2Z" fill="#58a6e8" stroke="none" stroke-width="0.8" /><path d="M838,475.4 L840,476.6 L840,481 L838,482Z" fill="#8cc6f4" stroke="none" stroke-width="0.8" /><path d="M838.8,474.8 L841.8,477.8 M841.8,474.8 L838.8,477.8" fill="none" stroke="#e8464a" stroke-width="0.9" /><path d="M838.6,478.4 l0,5.4 l1.3,-1.1 l0.9,2.0 l1.0,-0.5 l-0.9,-1.9 l1.7,0Z" fill="#f4f4f4" stroke="none" stroke-width="0.8" /><path d="M847.2,478.6 L853,478.6 M850.6,475 L850.6,482.4" fill="none" stroke="#f0f0f0" stroke-width="0.9" /><path d="M851.6,478.4 l0,5.4 l1.3,-1.1 l0.9,2.0 l1.0,-0.5 l-0.9,-1.9 l1.7,0Z" fill="#f4f4f4" stroke="none" stroke-width="0.8" /><circle cx="863.80" cy="479.20" r="3.00" fill="none" stroke="#6b7483" stroke-width="0.9" stroke-dasharray="1.2 1.1"/><path d="M870.6,475.6 L878.6,475.6 L875.6,479 L875.6,483.4 L873.6,483.4 L873.6,479Z" fill="#b4b8c0" stroke="none" stroke-width="0.8" /><text x="880" y="482.8" font-family="Liberation Sans, sans-serif" font-size="4.8" fill="#d9b36a">:0</text><rect x="600.00" y="488.20" width="18.60" height="1.80" fill="#5a4a5e" rx="0.9"/><ellipse cx="854.1" cy="164.3" rx="32.3" ry="22" fill="#f5f5f5" stroke="#d9d9d9" stroke-width="0.6"/><ellipse cx="855" cy="163.4" rx="25" ry="16.6" fill="#ffffff" stroke="#dedede" stroke-width="0.6"/><circle cx="832.90" cy="146.60" r="2.00" fill="#fbfbfb" stroke="#bdbdbd" stroke-width="0.6" /><circle cx="875.20" cy="146.40" r="2.00" fill="#fbfbfb" stroke="#bdbdbd" stroke-width="0.6" /><circle cx="832.90" cy="176.40" r="3.40" fill="#fbfbfb" stroke="#bdbdbd" stroke-width="0.6" /><circle cx="878.00" cy="175.20" r="2.80" fill="#fbfbfb" stroke="#bdbdbd" stroke-width="0.6" /><ellipse cx="856" cy="168" rx="15" ry="6.5" fill="#efefef"/><ellipse cx="856" cy="167" rx="11" ry="4.5" fill="#e4e4e4"/><path d="M854.3,130.3 L872.1,140 L855.7,150 L837.1,140.7Z" fill="#f1f1f1" stroke="#c4c4c4" stroke-width="0.4" /><path d="M837.1,140.7 L855.7,150 L855.7,170.3 L838.6,160.7Z" fill="#e4e4e4" stroke="#c9c9c9" stroke-width="0.4" /><path d="M855.7,150 L872.1,140 L870.7,161.4 L855.7,170.3Z" fill="#d9d9d9" stroke="#c9c9c9" stroke-width="0.4" /><text transform="translate(848.6,146.4) rotate(-33) skewX(25)" font-family="Liberation Sans, sans-serif" font-size="3.6" fill="#8a8a8a">SUPERIOR</text><text transform="translate(840.2,152.4) rotate(28) skewX(28)" font-family="Liberation Sans, sans-serif" font-size="3.5" fill="#8a8a8a">FRONTAL</text><text transform="translate(858.4,159.4) rotate(-31) skewX(-28)" font-family="Liberation Sans, sans-serif" font-size="3.5" fill="#8a8a8a">DERECHA</text><rect x="883.20" y="190.80" width="16.60" height="59.60" fill="#f3f3f3" stroke="#c9c9c9" stroke-width="0.6" rx="1"/><circle cx="896.40" cy="193.60" r="1.40" fill="#fff" stroke="#9a9a9a" stroke-width="0.5" /><circle cx="896.40" cy="247.20" r="1.40" fill="#fff" stroke="#9a9a9a" stroke-width="0.5" /><circle cx="890.80" cy="204.60" r="5.40" fill="#f8f8f8" stroke="#a8a8a8" stroke-width="0.7" /><circle cx="890.80" cy="204.60" r="2.60" fill="#fff" stroke="#bbbbbb" stroke-width="0.5" /><rect x="892.40" y="207.20" width="5.00" height="4.80" fill="#5b9be0" stroke="#e8f0fa" stroke-width="0.4"/><path d="M889.80,216.94 L892.20,216.94 L891.00,218.50Z" fill="#777" stroke="none" stroke-width="0.8" /><line x1="884.40" y1="220.40" x2="898.60" y2="220.40" stroke="#c9c9c9" stroke-width="0.6" /><rect x="887.40" y="225.20" width="5.40" height="5.60" fill="#7fc36a" stroke="#4d8a3e" stroke-width="0.4"/><circle cx="892.60" cy="230.20" r="1.80" fill="#f3f3f3" stroke="#555" stroke-width="0.6" /><path d="M893.8,231.6 L895.6,233.4" fill="none" stroke="#555" stroke-width="0.8" /><path d="M889.80,238.74 L892.20,238.74 L891.00,240.30Z" fill="#777" stroke="none" stroke-width="0.8" /></svg>
</div></body></html>
